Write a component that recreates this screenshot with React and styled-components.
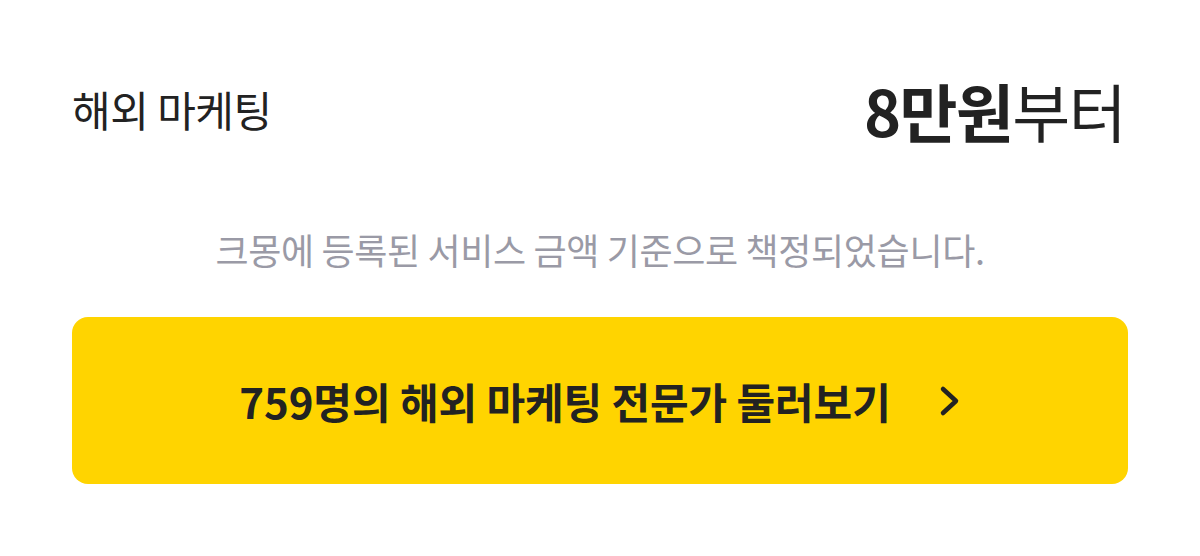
import React from "react";
import styled, { createGlobalStyle } from "styled-components";

const GlobalStyle = createGlobalStyle`
  html, body {
    margin: 0;
    padding: 0;
    background: #ffffff;
  }
  * {
    box-sizing: border-box;
    font-family: "Noto Sans CJK KR", "Noto Sans", sans-serif;
  }
`;

const Wrapper = styled.section`
  width: 1200px;
  padding: 71px 72px 0;
`;

const PriceRow = styled.div`
  display: flex;
  justify-content: space-between;
  align-items: center;
  height: 77px;
  margin-bottom: 2px;
  padding-right: 3px;
`;

const Category = styled.h2`
  margin: 0;
  font-size: 42px;
  font-weight: 400;
  color: #222222;
  letter-spacing: -0.5px;
  line-height: 1.2;
`;

const Price = styled.div`
  font-size: 63px;
  color: #222222;
  letter-spacing: -1.6px;
  line-height: 1.2;

  strong {
    font-weight: 700;
  }
  span {
    font-weight: 400;
  }
`;

const Notice = styled.p`
  margin: 76px 0 0;
  text-align: center;
  font-size: 36px;
  line-height: 1.4;
  color: #9a9aa6;
  letter-spacing: -0.35px;
`;

const MoreButton = styled.button`
  display: flex;
  align-items: center;
  justify-content: center;
  gap: 48px;
  width: 100%;
  height: 167px;
  margin-top: 43px;
  padding: 0;
  border: none;
  border-radius: 16px;
  background: #ffd400;
  color: #222222;
  font-size: 42px;
  font-weight: 700;
  letter-spacing: -0.1px;
  cursor: pointer;
`;

const Chevron = () => (
  <svg width="22" height="36" viewBox="0 0 22 36" fill="none">
    <path
      d="M4 6 L17 18 L4 30"
      stroke="#222222"
      strokeWidth="4.5"
      strokeLinecap="round"
      strokeLinejoin="round"
    />
  </svg>
);

export default function App() {
  return (
    <>
      <GlobalStyle />
      <Wrapper>
        <PriceRow>
          <Category>해외 마케팅</Category>
          <Price>
            <strong>8만원</strong>
            <span>부터</span>
          </Price>
        </PriceRow>
        <Notice>크몽에 등록된 서비스 금액 기준으로 책정되었습니다.</Notice>
        <MoreButton type="button">
          759명의 해외 마케팅 전문가 둘러보기
          <Chevron />
        </MoreButton>
      </Wrapper>
    </>
  );
}
